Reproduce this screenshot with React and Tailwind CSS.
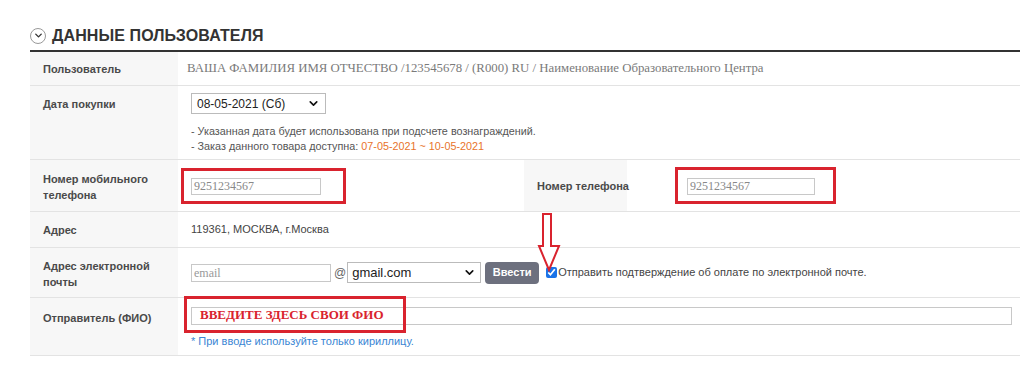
import { ChevronDown } from 'lucide-react'

const sans = { fontFamily: '"Liberation Sans", Arial, sans-serif' }
const serif = { fontFamily: '"Liberation Serif", "Times New Roman", serif' }

function Label({ children, w = 'w-[148px]', className = '' }) {
  return (
    <div className={`${w} shrink-0 bg-[#f7f7f7] pl-[13px] pr-1 flex items-center text-[11px] font-bold leading-[16px] text-[#4a4a4a] ${className}`}>
      {children}
    </div>
  )
}

function Arrow() {
  return (
    <svg className="absolute left-[537px] top-[213px]" width="24" height="59" viewBox="0 0 24 59">
      <polygon points="6,1 14,1 14,33 22,33 12,57 2,33 6,33" fill="white" stroke="#d9232e" strokeWidth="2" strokeLinejoin="miter" />
    </svg>
  )
}

export default function App() {
  return (
    <div className="relative w-[1026px] h-[379px] bg-white" style={sans}>
      <div className="pl-[30px] pr-[6px] pt-[26px]">
        {/* Header */}
        <div className="flex items-center gap-[6px] h-[24px] pb-[5px]">
          <div className="w-[16px] h-[16px] rounded-full border border-[#999] flex items-center justify-center">
            <ChevronDown size={11} strokeWidth={3} color="#333" />
          </div>
          <h2 className="text-[16px] font-bold text-[#333] tracking-[0.1px]">ДАННЫЕ ПОЛЬЗОВАТЕЛЯ</h2>
        </div>
        <div className="h-[2px] bg-[#333]" />

        {/* Пользователь */}
        <div className="flex h-[34px] border-b border-[#e3e3e3]">
          <Label>Пользователь</Label>
          <div className="flex items-center pl-[9px] text-[12.8px] text-[#7a7a7a]" style={serif}>
            ВАША ФАМИЛИЯ ИМЯ ОТЧЕСТВО /123545678 / (R000) RU / Наименование Образовательного Центра
          </div>
        </div>

        {/* Дата покупки */}
        <div className="flex h-[74px] border-b border-[#e3e3e3]">
          <Label className="items-start pt-[10px]">Дата покупки</Label>
          <div className="pl-[13px] pt-[7px]">
            <div className="w-[135px] h-[21px] border border-[#bbb] flex items-center justify-between px-[5px] text-[12px] text-[#222]">
              <span>08-05-2021 (Сб)</span>
              <ChevronDown size={13} strokeWidth={3} color="#111" />
            </div>
            <div className="mt-[10px] text-[10.8px] leading-[15px] text-[#555]">
              <div>- Указанная дата будет использована при подсчете вознаграждений.</div>
              <div>- Заказ данного товара доступна: <span className="text-[#e8732a]">07-05-2021 ~ 10-05-2021</span></div>
            </div>
          </div>
        </div>

        {/* Телефоны */}
        <div className="flex h-[52px] border-b border-[#e3e3e3]">
          <Label className="pt-[2px]">Номер мобильного<br />телефона</Label>
          <div className="w-[346px] flex items-center pl-[3px]">
            <div className="w-[165px] h-[36px] border-[3px] border-[#d9232e] pl-[7px] pt-[7px]">
              <div className="w-[130px] h-[17px] border border-[#c8c8c8] px-[2px] text-[12px] leading-[15px] text-[#888]" style={serif}>9251234567</div>
            </div>
          </div>
          <Label w="w-[103px]" className="whitespace-nowrap">Номер телефона</Label>
          <div className="flex items-center pl-[48px]">
            <div className="w-[161px] h-[37px] border-[3px] border-[#d9232e] pl-[9px] pt-[8px]">
              <div className="w-[128px] h-[17px] border border-[#c8c8c8] px-[2px] text-[12px] leading-[15px] text-[#888]" style={serif}>9251234567</div>
            </div>
          </div>
        </div>

        {/* Адрес */}
        <div className="flex h-[36px] border-b border-[#e3e3e3]">
          <Label>Адрес</Label>
          <div className="flex items-center pl-[13px] text-[11px] text-[#444]">119361, МОСКВА, г.Москва</div>
        </div>

        {/* Email */}
        <div className="flex h-[50px] border-b border-[#e3e3e3]">
          <Label className="pt-[2px]">Адрес электронной<br />почты</Label>
          <div className="flex items-center pl-[13px] text-[11px] text-[#444]">
            <div className="w-[140px] h-[18px] border border-[#c8c8c8] px-[2px] text-[12px] leading-[16px] text-[#999]" style={serif}>email</div>
            <span className="ml-[3px] text-[12px] text-[#666]">@</span>
            <div className="ml-[1px] w-[134px] h-[21px] border border-[#bbb] flex items-center justify-between px-[4px] text-[13px] text-[#222]">
              <span>gmail.com</span>
              <ChevronDown size={13} strokeWidth={3} color="#111" />
            </div>
            <button className="ml-[4px] w-[54px] h-[22px] rounded-[4px] bg-[#6d707e] text-white text-[11px] font-bold">Ввести</button>
            <input type="checkbox" defaultChecked className="ml-[7px] w-[11px] h-[11px] accent-[#1a73e8]" />
            <span className="ml-[1px] text-[11px] text-[#444]">Отправить подтверждение об оплате по электронной почте.</span>
          </div>
        </div>

        {/* Отправитель */}
        <div className="flex h-[58px] border-b border-[#e3e3e3]">
          <Label className="items-start pt-[12px]">Отправитель (ФИО)</Label>
          <div className="relative flex-1 pl-[13px] pt-[9px]">
            <div className="w-[821px] h-[18px] border border-[#c8c8c8]" />
            <div className="mt-[8px] text-[11px] text-[#3a86d4]">* При вводе используйте только кириллицу.</div>
            <div className="absolute left-[6px] top-[-2px] w-[222px] h-[37px] border-[3px] border-[#d9232e] flex items-center pl-[13px] text-[13px] font-bold text-[#d9232e]" style={serif}>
              ВВЕДИТЕ ЗДЕСЬ СВОИ ФИО
            </div>
          </div>
        </div>
      </div>
      <Arrow />
    </div>
  )
}
